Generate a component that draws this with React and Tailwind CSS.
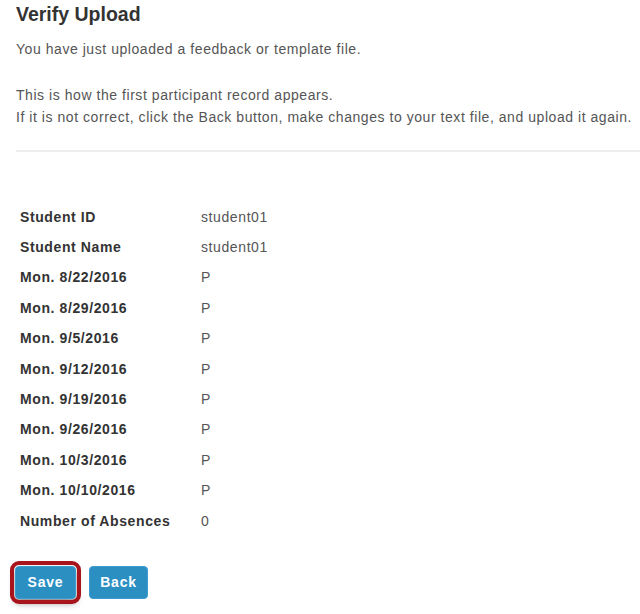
export default function App() {
  const rows = [
    ["Student ID", "student01"],
    ["Student Name", "student01"],
    ["Mon. 8/22/2016", "P"],
    ["Mon. 8/29/2016", "P"],
    ["Mon. 9/5/2016", "P"],
    ["Mon. 9/12/2016", "P"],
    ["Mon. 9/19/2016", "P"],
    ["Mon. 9/26/2016", "P"],
    ["Mon. 10/3/2016", "P"],
    ["Mon. 10/10/2016", "P"],
    ["Number of Absences", "0"],
  ];
  return (
    <div
      className="w-[640px] h-[614px] bg-white pl-4 overflow-hidden"
      style={{ fontFamily: '"Liberation Sans", Arial, sans-serif' }}
    >
      <h2 className="pt-[2px] text-[19.5px] leading-[24px] font-bold text-[#333]">
        Verify Upload
      </h2>
      <p className="mt-[12px] text-[14px] leading-[22px] tracking-[0.55px] text-[#555]">
        You have just uploaded a feedback or template file.
      </p>
      <p className="mt-[24px] text-[14px] leading-[22px] tracking-[0.55px] text-[#555] whitespace-nowrap">
        This is how the first participant record appears.
        <br />
        If it is not correct, click the Back button, make changes to your text file, and upload it again.
      </p>
      <div className="mt-[22px] h-[2px] bg-[#eeeeee]" />
      <div className="mt-[50px] pl-1">
        {rows.map(([k, v]) => (
          <div key={k} className="flex h-[30.4px] items-center text-[14px] tracking-[0.6px]">
            <div className="w-[181px] font-bold text-[#333]">{k}</div>
            <div className="text-[#555]">{v}</div>
          </div>
        ))}
      </div>
      <div className="mt-[30px] flex gap-[13px] -ml-px">
        <button className="h-[33px] w-[61px] rounded-[4px] border border-[#3a9ccf] bg-[#2b8fc2] text-[14px] font-bold tracking-[0.8px] text-white outline-[4px] outline-solid outline-[#a8141c] outline-offset-[1px] shadow-[0_4px_7px_rgba(0,0,0,0.45)]">
          Save
        </button>
        <button className="h-[33px] w-[59px] rounded-[4px] border border-[#3a9ccf] bg-[#2b8fc2] text-[14px] font-bold tracking-[0.8px] text-white">
          Back
        </button>
      </div>
    </div>
  );
}
